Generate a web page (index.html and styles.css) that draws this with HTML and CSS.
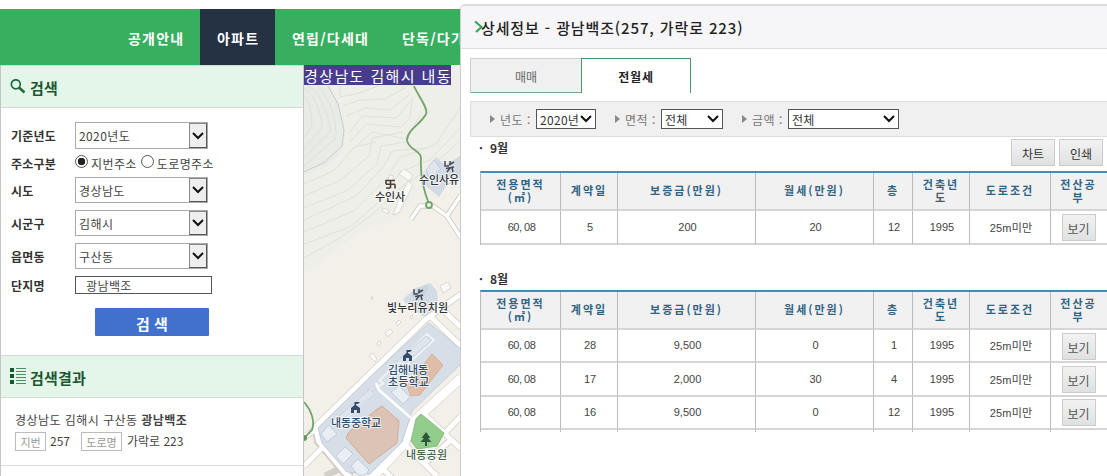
FILE: index.html
```html
<!DOCTYPE html>
<html lang="ko">
<head>
    <meta charset="UTF-8">
    <meta name="viewport" content="width=device-width, initial-scale=1.0">
    <title>실거래가 - 아파트</title>
    <link rel="stylesheet" href="styles.css">
</head>
<body>
    <div class="page">
        <div class="main">
            <nav class="gnb">
                <a class="first">공개안내</a>
                <a class="active">아파트</a>
                <a>연립/다세대</a>
                <a>단독/다가구</a>
            </nav>
            <div class="content">
                <aside class="sidebar">
                    <h2 class="side-title">
                        <svg width="16" height="16" viewBox="0 0 16 16"><circle cx="5.800" cy="5.300" r="4.500" fill="none" stroke="#1c6b3c" stroke-width="1.700"/><path d="M9 8.500L14.500 13.500" stroke="#1c6b3c" stroke-width="2.500"/></svg>
                        <span>검색</span>
                    </h2>
                    <form class="search-form">
                        <div class="row year"><label>기준년도</label><div class="select">2020년도<i><svg width="12" height="8" viewBox="0 0 12 8"><path d="M1 1L6 6L11 1" fill="none" stroke="#111" stroke-width="2"/></svg></i></div></div>
                        <div class="row kind">
                            <label>주소구분</label>
                            <input type="radio" name="addr" checked><span class="jibun">지번주소</span>
                            <input type="radio" name="addr"><span>도로명주소</span>
                        </div>
                        <div class="row sido"><label>시도</label><div class="select">경상남도<i><svg width="12" height="8" viewBox="0 0 12 8"><path d="M1 1L6 6L11 1" fill="none" stroke="#111" stroke-width="2"/></svg></i></div></div>
                        <div class="row gungu"><label>시군구</label><div class="select">김해시<i><svg width="12" height="8" viewBox="0 0 12 8"><path d="M1 1L6 6L11 1" fill="none" stroke="#111" stroke-width="2"/></svg></i></div></div>
                        <div class="row dong"><label>읍면동</label><div class="select">구산동<i><svg width="12" height="8" viewBox="0 0 12 8"><path d="M1 1L6 6L11 1" fill="none" stroke="#111" stroke-width="2"/></svg></i></div></div>
                        <div class="row name"><label>단지명</label><div class="text-input">광남백조</div></div>
                        <button type="button" class="search-btn">검 색</button>
                    </form>
                    <h2 class="side-title result-title">
                        <svg width="16" height="16" viewBox="0 0 16 16"><path d="M0 0h4v4H0zM0 6h4v4H0zM0 12h4v4H0z" fill="#14592f"/><path d="M6 .5h10M6 3.500h10M6 6.500h10M6 9.500h10M6 12.500h10M6 15.500h10" stroke="#4c8d65"/></svg>
                        <span>검색결과</span>
                    </h2>
                    <div class="result">
                        <p>경상남도 김해시 구산동 <b>광남백조</b></p>
                        <p class="addr"><em>지번</em><span class="num">257</span><em>도로명</em><span>가락로 223</span></p>
                    </div>
                </aside>
                <div class="map">
                    <svg width="157" height="411" viewBox="304 65 157 411">
                        <rect x="304" y="65" width="157" height="411" fill="#f3f0e9"/>
                        <!-- hill -->
                        <path d="M304 65H461V150L425 186L396 218L360 232L322 262L304 272Z" fill="#eeefe9"/>
                        <path d="M304 86H330L344 120L343 150L330 165L304 175Z" fill="#e9ebe6"/>
                        <g fill="none" stroke="#dfe1dc" stroke-width="1">
                            <path d="M304 96C313 106 311 123 312 126L304 137M304 88C316 95 322 118 322 128L304 148M307 86C320 90 330 118 330 132L304 158M318 86C330 98 337 120 336 138L304 166"/>
                            <path d="M328 86L338 104L344 130L342 146L325 162L304 172" stroke="#c9ccc8"/>
                            <path d="M340 86V97L360 93L378 86M343 106L360 100L385 99L405 88M346 116L365 108L390 110L410 94M350 132L362 116L397 118L413 98M350 142L366 124L401 127L410 118L412 100M350 152L372 132L407 139L420 115"/>
                            <path d="M304 184L335 170L354 147L376 142M304 196L341 180L369 156L372 138L403 132M304 208L348 190L377 164L381 146L406 142M304 220L356 196L384 166L392 151L425 148M304 232L354 211L388 177L399 158L435 145L461 106M304 244L352 226L385 196L400 172L430 160L461 127M304 258L340 238L373 214L404 185L428 170L461 140"/>
                        </g>
                        <!-- small buildings -->
                        <g fill="#faf9f6" stroke="#d5d1c8" stroke-width="0.8">
                            <path d="M399 174l5-5 9 6-4 6zM390 175l4 1-2 5-4-2zM408 181l5 4-14 28-6 2 6-17zM383 208l6 2-1 4-6-3z"/>
                            <path d="M440 286l8-4 3 6-8 5zM385 333l5-4 3 3-4 4h-3zM396 323l3-3 2 2-3 4zM369 356l4-3 4 6-2 3zM377 343l3-2 1 3-3 2zM410 317l2-2 1 2-2 2zM371 297h2v2h-2z"/>
                        </g>
                        <path d="M425 174L436 157L445 165L461 155V178L447 185L439 197L425 185Z" fill="#d2dae4"/>
                        <path d="M426 170L434 160L441 169L430 178ZM445 177l12-4v9l-12 3z" fill="#dee5ed" stroke="#c3cfdd"/>
                        <path d="M411 219L420 206H433L447 216L461 238M447 216L461 195" fill="none" stroke="#c7c4bd" stroke-width="5"/>
                        <path d="M411 219L420 206H433L447 216L461 238M447 216L461 195" fill="none" stroke="#fff" stroke-width="3.500"/>
                        <path d="M403 299L416 288L430 283L437 291L438 301L432 318L426 318L408 306Z" fill="#d3dce6"/>
                        <path d="M411 296l16-12 2 4-8 12z" fill="#c8d4e0"/>
                        <!-- roads: casing first, then white -->
                        <g fill="none" stroke="#d3cfc7" stroke-width="6.500">
                            <path d="M316 426L425 320L461 294M431 317L461 346M444 311L461 327M304 437L315 430M304 466L322 448M350 476L345 466L325 476M404 444L437 476M380 466L392 478M422 412L461 449M446 432L461 416M451 440L424 464"/>
                        </g>
                        <path d="M461 378L415 420L404 444L370 480M316 426L319 441L350 478" fill="none" stroke="#d3cfc7" stroke-width="10"/>
                        <g fill="none" stroke="#fff" stroke-width="5">
                            <path d="M316 426L425 320L461 294M431 317L461 346M444 311L461 327M304 437L315 430M304 466L322 448M404 444L437 476M380 466L392 478M422 412L461 449M446 432L461 416M451 440L424 464"/>
                        </g>
                        <path d="M461 378L415 420L404 444L370 480" fill="none" stroke="#fff" stroke-width="9" stroke-linejoin="round"/>
                        <path d="M316 426L319 441L350 478" fill="none" stroke="#fff" stroke-width="6"/>
                        <!-- school grounds -->
                        <path d="M429 323L461 349V364L412 411L402 442L370 474L347 472L322 443L318 428L369 378Z" fill="#d6dee7" stroke="#c4cdd9"/>
                        <path d="M376 383L379 390L411 418" fill="none" stroke="#fff" stroke-width="2.500"/>
                        <g fill="none" stroke="#eff3f6" stroke-width="2">
                            <path d="M372 389L331 425M375 393L342 421M379 386L384 383M379 380L384 384M380 380L427 334L434 340L391 379"/>
                        </g>
                        <path d="M336 419L370 389L375 394L343 419ZM393 365L426 336L431 341L397 371Z" fill="#dee6ed" stroke="#c3cdd8" stroke-width="0.800"/>
                        <path d="M382 406L399 421L397 443L369 464L346 438L349 432L376 410Z" fill="#dbc3b5" stroke="#dba98d"/>
                        <path d="M407 386L432 354L443 365L420 395L411 396Z" fill="#dfbda9" stroke="#dfae92"/>
                        <path d="M321 434L329 425L337 434L327 442ZM336 456L345 447L353 454L343 464ZM351 466L358 459L369 470L365 475H358ZM391 392L399 386L410 397L403 404Z" fill="#e8eef4" stroke="#bac7d5" stroke-width="0.800"/>
                        <!-- park -->
                        <path d="M421 414L444 433L437 446L417 449L411 441L416 419Z" fill="#92cd8b" stroke="#84bd7e" stroke-linejoin="round"/>
                        <!-- trails -->
                        <g fill="none" stroke="#71a56a" stroke-width="1.800">
                            <path d="M414 86C417 94 429 109 426 114C421 124 407 130 407 140C408 150 421 150 421 158C420 176 425 194 429 204M304 402C312 411 315 422 312 430L304 438"/>
                            <circle cx="429" cy="205" r="3" fill="#e9f2e2"/>
                        </g>
                        <circle cx="304" cy="438" r="3" fill="#62965d"/>
                        <!-- place icons -->
                        <path d="M386 180.500H390.500V188M386 184.300H395M390.500 180.500H395M386 180V184.300M390.500 188H386M395 184.300V188.500M390.500 184V180" fill="none" stroke="#4a4036" stroke-width="1.600"/>
                        <g fill="none" stroke="#494d57" stroke-width="1.500">
                            <path d="M445 161V166H449M450 161V165M449 165L454 162M446 168.500L454 167M450 168L447 172M452 167.500L453 172M414 289V294H418M419 289V293M418 293L423 290M415 296.500L423 295M419 296L416 300M421 295.500L422 300"/>
                        </g>
                        <path d="M403 361V356L406.500 353V350H412L410 352H408V353L412 356V361H409V358H406V361ZM351 413V408L354.500 405V402H360L358 404H356V405L360 408V413H357V410H354V413Z" fill="#344b6a"/>
                        <path d="M426 432L421.500 438H424L420.500 442H425V446H427V442H431.500L428 438H430.500Z" fill="#2f573c"/>
                        <g class="labels">
                            <text x="375" y="201" textLength="30">수인사</text>
                            <text x="419" y="184" textLength="40">수인사유</text>
                            <text x="387" y="312" textLength="61">빛누리유치원</text>
                            <text class="school" x="388" y="373.500" textLength="40">김해내동</text>
                            <text class="school" x="388" y="386" textLength="41">초등학교</text>
                            <text class="school" x="331" y="426.500" textLength="50">내동중학교</text>
                            <text class="park" x="406" y="459" textLength="41">내동공원</text>
                        </g>
                    </svg>
                    <div class="map-title">경상남도 김해시 내동</div>
                </div>
            </div>
        </div>

        <section class="detail">
            <h1>
                <svg width="10" height="14" viewBox="0 0 10 14"><path d="M1 1.500L7.500 7L2 12" fill="none" stroke="#35a65c" stroke-width="2.200"/></svg>
                <span>상세정보 - 광남백조(257, 가락로 223)</span>
            </h1>
            <div class="tabs">
                <a>매매</a>
                <a class="on">전월세</a>
            </div>
            <div class="filter">
                <svg width="5" height="8" viewBox="0 0 5 8"><path d="M0 0L5 4L0 8Z" fill="#888"/></svg>
                <label>년도 :</label><div class="drop year-drop">2020년<svg width="12" height="8" viewBox="0 0 12 8"><path d="M1 1L6 6L11 1" fill="none" stroke="#111" stroke-width="2"/></svg></div>
                <svg width="5" height="8" viewBox="0 0 5 8"><path d="M0 0L5 4L0 8Z" fill="#888"/></svg>
                <label>면적 :</label><div class="drop area-drop">전체<svg width="12" height="8" viewBox="0 0 12 8"><path d="M1 1L6 6L11 1" fill="none" stroke="#111" stroke-width="2"/></svg></div>
                <svg width="5" height="8" viewBox="0 0 5 8"><path d="M0 0L5 4L0 8Z" fill="#888"/></svg>
                <label>금액 :</label><div class="drop price-drop">전체<svg width="12" height="8" viewBox="0 0 12 8"><path d="M1 1L6 6L11 1" fill="none" stroke="#111" stroke-width="2"/></svg></div>
            </div>

            <div class="month">
                <h3><span class="dot">·</span>9월</h3>
                <div class="btns"><button>차트</button><button>인쇄</button></div>
            </div>
            <table>
                <colgroup><col class="c1"><col class="c2"><col class="c3"><col class="c4"><col class="c5"><col class="c6"><col class="c7"><col class="c8"></colgroup>
                <thead>
                    <tr><th>전용면적<br>(㎡)</th><th>계약일</th><th>보증금(만원)</th><th>월세(만원)</th><th>층</th><th>건축년<br>도</th><th>도로조건</th><th>전산공<br>부</th></tr>
                </thead>
                <tbody>
                    <tr><td class="size">60, 08</td><td>5</td><td>200</td><td>20</td><td>12</td><td>1995</td><td class="road">25m미만</td><td><button>보기</button></td></tr>
                </tbody>
            </table>

            <div class="month second">
                <h3><span class="dot">·</span>8월</h3>
            </div>
            <table class="more">
                <colgroup><col class="c1"><col class="c2"><col class="c3"><col class="c4"><col class="c5"><col class="c6"><col class="c7"><col class="c8"></colgroup>
                <thead>
                    <tr><th>전용면적<br>(㎡)</th><th>계약일</th><th>보증금(만원)</th><th>월세(만원)</th><th>층</th><th>건축년<br>도</th><th>도로조건</th><th>전산공<br>부</th></tr>
                </thead>
                <tbody>
                    <tr><td class="size">60, 08</td><td>28</td><td>9,500</td><td>0</td><td>1</td><td>1995</td><td class="road">25m미만</td><td><button>보기</button></td></tr>
                    <tr><td class="size">60, 08</td><td>17</td><td>2,000</td><td>30</td><td>4</td><td>1995</td><td class="road">25m미만</td><td><button>보기</button></td></tr>
                    <tr><td class="size">60, 08</td><td>16</td><td>9,500</td><td>0</td><td>12</td><td>1995</td><td class="road">25m미만</td><td><button>보기</button></td></tr>
                    <tr class="cut"><td></td><td></td><td></td><td></td><td></td><td></td><td></td><td></td></tr>
                </tbody>
            </table>
        </section>
    </div>
</body>
</html>
```
FILE: styles.css
```css
* {
    box-sizing: border-box;
}
body {
    margin: 0;
    background: #fff;
    color: #444;
    font-family: "Noto Sans CJK KR", sans-serif;
    font-size: 12px;
    overflow: hidden;
}
h1, h2, h3, p {
    margin: 0;
}
svg {
    display: block;
    flex: none;
}
button {
    font-family: inherit;
    padding: 0;
}
.page {
    display: flex;
    width: 1107px;
    height: 476px;
    overflow: hidden;
}
.main {
    width: 460px;
    padding-top: 9px;
    overflow: hidden;
    flex: none;
}

/* top menu */
.gnb {
    display: flex;
    height: 56px;
    padding-left: 111px;
    background: #38ae5f;
}
.gnb a {
    flex: none;
    width: 110px;
    padding-left: 17px;
    color: #fff;
    font-size: 14px;
    font-weight: bold;
    letter-spacing: 1.2px;
    line-height: 59px;
    white-space: nowrap;
}
.gnb .first {
    width: 89px;
}
.gnb .active {
    width: 75px;
    background: #243244;
}
.content {
    display: flex;
}

/* search sidebar */
.sidebar {
    width: 304px;
    height: 411px;
    flex: none;
    border-left: 1px solid #c5c5c5;
    border-right: 1px solid #c5c5c5;
    background: #fff;
}
.side-title {
    display: flex;
    align-items: center;
    gap: 4px;
    height: 43px;
    padding: 0 0 0 9px;
    background: #e4f6ea;
    border-top: 1px solid #cfddd4;
    border-bottom: 1px solid #cfddd4;
    color: #1d5631;
    font-size: 15px;
    letter-spacing: 0.2px;
}
.side-title span {
    padding-top: 2px;
}
.result-title svg {
    margin-top: -1px;
}
.search-form {
    display: flex;
    flex-direction: column;
    height: 247px;
    padding: 14px 0 0 10px;
}
.row {
    display: flex;
    align-items: center;
    height: 26px;
    margin-bottom: 7px;
    letter-spacing: 0.4px;
}
.row label {
    width: 64px;
    color: #333;
    font-weight: bold;
    font-size: 12px;
    letter-spacing: 0.2px;
}
.row.year {
    height: 27px;
    margin-bottom: 0;
}
.row.kind {
    height: 28px;
    margin-bottom: 0;
}
.select {
    display: flex;
    align-items: center;
    justify-content: space-between;
    width: 133px;
    height: 100%;
    padding-left: 3px;
    border: 1px solid #aaa;
}
.select i {
    display: flex;
    align-items: center;
    justify-content: center;
    width: 18px;
    height: 100%;
    background: #eee;
    border: 1px solid #888;
    border-right-color: #555;
    border-bottom-color: #555;
}
.row input {
    appearance: none;
    width: 13px;
    height: 13px;
    margin: 0 3px 3px 0;
    border: 1px solid #555;
    border-radius: 50%;
}
.row input:checked {
    background: radial-gradient(circle, #222 3.5px, #fff 4px);
}
.jibun {
    margin-right: 4px;
}
.row.name {
    height: 18px;
    margin-bottom: 13px;
}
.text-input {
    width: 137px;
    height: 18px;
    padding-left: 10px;
    border: 1px solid #555;
    line-height: 17px;
}
.search-btn {
    width: 114px;
    height: 28px;
    margin: 1px 0 0 84px;
    border: 0;
    border-radius: 1px;
    background: #4270cd;
    color: #fff;
    font-size: 15px;
    font-weight: bold;
    line-height: 31px;
}
.result {
    height: 68px;
    padding: 12px 0 0 14px;
    border-bottom: 1px solid #ddd;
    letter-spacing: 0.45px;
}
.result p {
    line-height: 20px;
    white-space: nowrap;
}
.result .addr {
    display: flex;
    align-items: center;
    margin-top: 1px;
    letter-spacing: 0;
}
.addr em {
    width: 31px;
    height: 19px;
    margin-right: 4px;
    border: 1px solid #bbb;
    color: #999;
    font-size: 11px;
    font-style: normal;
    line-height: 18px;
    text-align: center;
}
.addr .num {
    margin-right: 11px;
}
.addr .num + em {
    width: 41px;
    margin-right: 5px;
}

/* map */
.map {
    position: relative;
    width: 157px;
    height: 411px;
    flex: none;
}
.map-title {
    position: absolute;
    left: 0;
    top: 0;
    width: 147px;
    height: 20px;
    background: #483d8b;
    color: #fff;
    font-size: 15px;
    line-height: 22px;
    letter-spacing: 1.4px;
    white-space: nowrap;
}
.labels text {
    font-size: 11px;
    font-weight: 500;
    fill: #333;
    stroke: #fff;
    stroke-width: 2px;
    stroke-opacity: 0.7;
    paint-order: stroke;
}
.labels .school {
    fill: #304c6c;
}
.labels .park {
    fill: #46634f;
}

/* detail panel */
.detail {
    flex: none;
    width: 647px;
    height: 480px;
    margin-top: 4px;
    border-left: 1px solid #ccc;
    border-top: 2px solid #ddd;
    border-top-left-radius: 5px;
    background: #fff;
    overflow: hidden;
}
.detail h1 {
    display: flex;
    align-items: center;
    height: 43px;
    padding-left: 13px;
    background: #f6f6f8;
    border-bottom: 1px solid #ddd;
    color: #222;
    font-size: 15px;
    font-weight: 500;
    letter-spacing: 0.88px;
}
.detail h1 span {
    margin-left: -3px;
    white-space: nowrap;
}
.tabs {
    display: flex;
    margin: 9px 0 0 9px;
}
.tabs a {
    width: 111px;
    height: 35px;
    background: #f0f0f0;
    border: 1px solid #ccc;
    border-right: 0;
    border-bottom-color: #79a888;
    color: #666;
    line-height: 35px;
    text-align: center;
}
.tabs .on {
    width: 110px;
    background: #fff;
    border: 1px solid #4c9566;
    border-bottom: 0;
    color: #222;
    font-weight: bold;
    letter-spacing: 0.8px;
}
.filter {
    display: flex;
    align-items: center;
    height: 36px;
    margin: 8px 0 0 9px;
    padding-left: 19px;
    background: #f0f0f0;
    border: 1px solid #ddd;
    border-right: 0;
}
.filter label {
    width: 36px;
    margin-left: 5px;
    color: #777;
    letter-spacing: 0.5px;
    white-space: nowrap;
}
.drop {
    display: flex;
    align-items: center;
    justify-content: space-between;
    height: 20px;
    padding: 0 3px;
    border: 1px solid #555;
    background: #fff;
    color: #333;
    letter-spacing: 0.3px;
}
.year-drop {
    width: 60px;
    margin-right: 19px;
}
.area-drop {
    width: 62px;
    margin-right: 19px;
}
.price-drop {
    width: 111px;
}
.month {
    display: flex;
    justify-content: space-between;
    height: 34px;
    padding: 2px 4px 0 18px;
}
.month h3 {
    color: #333;
    font-size: 12px;
    line-height: 18px;
}
.dot {
    display: inline-block;
    width: 11px;
}
.month.second {
    height: 45px;
    padding-top: 25px;
}
.btns {
    display: flex;
    gap: 4px;
}
.btns button {
    width: 44px;
    height: 27px;
    border: 1px solid #ccc;
    background: linear-gradient(#f2f2f2, #dfe1e1);
    color: #333;
    font-size: 12px;
    line-height: 27px;
}

/* deal tables */
table {
    width: 652px;
    margin-left: 19px;
    table-layout: fixed;
    border-collapse: separate;
    border-spacing: 0;
    border-top: 2px solid #448bb5;
    border-left: 1px solid #bbb;
}
.c1 { width: 80px; }
.c2 { width: 57px; }
.c3 { width: 138px; }
.c4 { width: 118px; }
.c5 { width: 39px; }
.c6 { width: 57px; }
.c7 { width: 81px; }
.c8 { width: 82px; }
th, td {
    padding: 0;
    border-right: 1px solid #bbb;
    border-bottom: 2px solid #d5d5d5;
    text-align: center;
}
th {
    height: 38px;
    padding-bottom: 1px;
    background: #f1f1f1;
    color: #2f6485;
    font-size: 11px;
    line-height: 13px;
    letter-spacing: 2px;
}
td {
    height: 34px;
    padding-bottom: 1px;
    padding-left: 2px;
    font-family: "Liberation Sans", "Noto Sans CJK KR", sans-serif;
    font-size: 11px;
}
.size {
    letter-spacing: -0.5px;
}
.road {
    letter-spacing: 0.2px;
}
th:last-child, td:last-child {
    padding-right: 26px;
    padding-left: 0;
}
td button {
    display: block;
    width: 34px;
    height: 27px;
    margin: 2px auto 0;
    border: 1px solid #ccc;
    background: linear-gradient(#f2f2f2, #dfe1e1);
    color: #555;
    font-family: "Noto Sans CJK KR", sans-serif;
    font-size: 12px;
    line-height: 27px;
}
.more td {
    height: 33.4px;
}
.more .cut td {
    height: 2px;
    padding: 0;
    border-bottom: 0;
}
```
